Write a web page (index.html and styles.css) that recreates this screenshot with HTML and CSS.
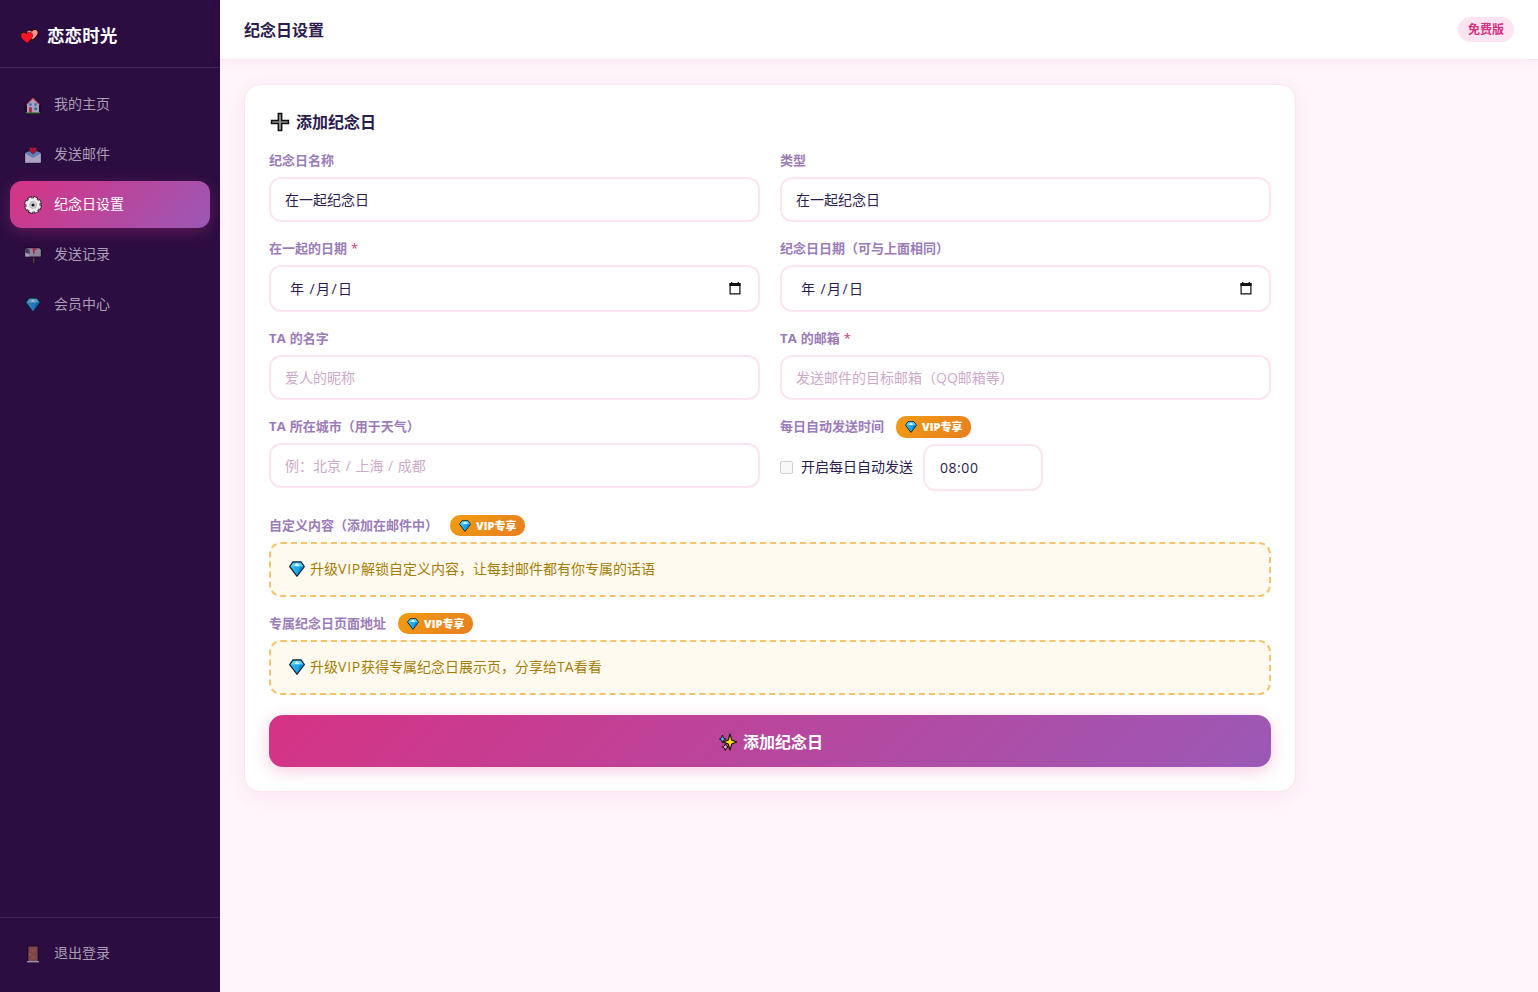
FILE: index.html
```
<!DOCTYPE html>
<html lang="zh-CN">
<head>
<meta charset="utf-8">
<title>纪念日设置</title>
<link rel="stylesheet" href="styles.css">
</head>
<body>
<svg class="defs" width="0" height="0" aria-hidden="true">
  <symbol id="gem" viewBox="0 0 16 16">
    <path d="M4 1h8l3.300 4.600L8 15.200.7 5.600z" fill="#35b8f0" stroke="#0b2030" stroke-width="1.300" stroke-linejoin="round"/>
    <path d="M4.300 1.700 1.600 5.600h3.200L8 1.700z" fill="#58d3fb"/>
    <path d="M8 1.700h3.700l2.700 3.900h-3.200z" fill="#58d3fb"/>
    <path d="M8 1.700 11.200 5.600H4.800z" fill="#d8f7ff"/>
    <path d="M4.800 5.600h6.400L8 14.300z" fill="#19a7ee"/>
    <path d="M11.200 5.600h3.200L8 14.300z" fill="#0b83cb"/>
  </symbol>
</svg>
<div class="app">
  <aside class="sidebar">
    <div class="logo">
      <svg class="logo-icon" viewBox="0 0 19 16">
        <path d="M12 12.300C9 10.500 6.200 8 6.400 4.800 6.600 1.800 10 1 11.800 3 13.500.6 17.600.8 18.200 3.800c.5 3-2.400 6-6.200 8.500z" fill="#ff8d8d" stroke="#1a0510" stroke-width="1.100"/>
        <path d="M7.400 15C3.800 12.800.7 10.300.8 7.200c.1-3 4-3.700 5.600-1.400C8 3.300 12.100 3.700 12.500 6.600c.4 3-2.200 6-5.100 8.400z" fill="#fb1525" stroke="#1a0510" stroke-width=".5"/>
      </svg>
      <span>恋恋时光</span>
    </div>
    <nav class="nav">
      <a class="item">
        <svg class="icon" viewBox="0 0 18 18">
          <path d="M1.500 8.300 9 1l7.500 7.300v8.900h-15z" fill="#160a20" stroke="#160a20" stroke-width="1.500" stroke-linejoin="round"/>
          <path d="M3 8v9h12V8L9 2.300z" fill="#e3e0f2"/>
          <path d="M2.300 8.600 9 2.100l6.700 6.500" fill="none" stroke="#e03c48" stroke-width="1.200"/>
          <path d="M5 11.200h3V17H5z" fill="#e0474e"/><path d="M10.300 11.500h2.900v2.700h-2.900zM5.300 7.300h2.400v2.400H5.300zM10.300 7.300h2.400v2.400h-2.400z" fill="#3d9be0"/>
          <path d="M1.800 16.800h14.400" stroke="#4fab45" stroke-width="1.200"/>
        </svg><span>我的主页</span></a>
      <a class="item">
        <svg class="icon" viewBox="0 0 18 18">
          <path d="M.6 6.500 5 4.800h8l4.400 1.700v10.700H.6z" fill="#5b93d8" stroke="#160a20" stroke-width="1.200"/>
          <path d="M1.200 7.200 9 11.800l7.800-4.600v9.500H1.200z" fill="#e3e1f4"/>
          <path d="M1.200 7.200 5 5.300h8l3.800 1.900L9 11.800z" fill="#77adea"/>
          <path d="M9 7.800C6 6 4.600 4.200 5.200 2.500 5.800.8 8.200.8 9 2.300 9.800.8 12.200.8 12.800 2.500 13.400 4.200 12 6 9 7.800z" fill="#e01838" stroke="#4a0a28" stroke-width=".6"/>
        </svg><span>发送邮件</span></a>
      <a class="item active">
        <svg class="icon" viewBox="0 0 18 18">
          <circle cx="9" cy="9" r="7" fill="#17171b" stroke="#17171b" stroke-width="3.600" stroke-dasharray="4.300 1.198"/>
          <circle cx="9" cy="9" r="6.700" fill="#ededee"/>
          <circle cx="9" cy="9" r="7" fill="none" stroke="#ededee" stroke-width="2" stroke-dasharray="3.100 2.398" stroke-dashoffset="-.6"/>
          <circle cx="9" cy="9" r="3.500" fill="#d8d8da" stroke="#a8a8ac" stroke-width=".8"/>
          <circle cx="9" cy="9" r="1.600" fill="#17171b"/>
        </svg><span>纪念日设置</span></a>
      <a class="item">
        <svg class="icon" viewBox="0 0 18 18">
          <path d="M8.800 10h2v7.500h-2z" fill="#9b6543" stroke="#160a20" stroke-width=".8"/>
          <path d="M3.200 1.700H15a2.500 2.500 0 0 1 2.400 2.600v6.900H.7V4.300a2.500 2.500 0 0 1 2.500-2.600z" fill="#bcb8c7" stroke="#160a20" stroke-width="1.200"/>
          <path d="M1.400 10.500V4.600a2 2 0 0 1 4.200 0v5.900z" fill="#55505f"/>
          <path d="M1.400 6.700 5.600 8v2.500H1.400z" fill="#e4e1f1"/>
          <path d="M8.600 2.300h3.700v2h-1.600v3.500H9.200z" fill="#dc3143"/>
        </svg><span>发送记录</span></a>
      <a class="item">
        <svg class="icon gem-icon"><use href="#gem"/></svg><span>会员中心</span></a>
    </nav>
    <div class="side-foot">
      <a class="item">
        <svg class="icon" viewBox="0 0 18 18">
          <path d="M3.700.8h10.600v16H3.700z" fill="#a8624f" stroke="#160a20" stroke-width="1.300"/>
          <path d="M5.800 3h6.400v5H5.800zM5.800 10h6.400v5H5.800z" fill="#ae6855" stroke="#965443" stroke-width=".6"/>
          <path d="M3 16.700h12" stroke="#c7c4cf" stroke-width="1.500"/><circle cx="6" cy="9.200" r=".8" fill="#e7b04d"/>
        </svg><span>退出登录</span></a>
    </div>
  </aside>
  <div class="main">
    <header class="topbar">
      <h1>纪念日设置</h1>
      <span class="plan">免费版</span>
    </header>
    <main class="content">
      <section class="card">
        <h2 class="card-title">
          <svg class="plus" viewBox="0 0 20 20"><path d="M8.300 1.500h3.400v7h6.800v3h-6.800v7H8.300v-7H1.500v-3h6.800z" fill="#8b8b8f" stroke="#111" stroke-width="1.400"/></svg>
          <span>添加纪念日</span>
        </h2>
        <div class="grid">
          <div class="field"><div class="label">纪念日名称</div><div class="input">在一起纪念日</div></div>
          <div class="field"><div class="label">类型</div><div class="input">在一起纪念日</div></div>
          <div class="field"><div class="label">在一起的日期<span class="req">*</span></div>
            <div class="input date"><span class="date-text"><span class="year">年</span><span class="sep">/</span>月<span class="sep">/</span>日</span>
              <svg class="cal" viewBox="0 0 12 13"><path d="M2 0h1.300v2H2zM8.700 0H10v2H8.700z" fill="#111"/><path d="M1.100 1.700h9.800v10.200H1.100z" fill="none" stroke="#111" stroke-width="1.200"/><path d="M.5 1.200h11v2.800H.5z" fill="#111"/></svg></div></div>
          <div class="field"><div class="label">纪念日日期（可与上面相同）</div>
            <div class="input date"><span class="date-text"><span class="year">年</span><span class="sep">/</span>月<span class="sep">/</span>日</span>
              <svg class="cal" viewBox="0 0 12 13"><path d="M2 0h1.300v2H2zM8.700 0H10v2H8.700z" fill="#111"/><path d="M1.100 1.700h9.800v10.200H1.100z" fill="none" stroke="#111" stroke-width="1.200"/><path d="M.5 1.200h11v2.800H.5z" fill="#111"/></svg></div></div>
          <div class="field"><div class="label"><span class="ta">TA </span>的名字</div><div class="input hint">爱人的昵称</div></div>
          <div class="field"><div class="label"><span class="ta">TA </span>的邮箱<span class="req">*</span></div><div class="input hint">发送邮件的目标邮箱（QQ邮箱等）</div></div>
          <div class="field"><div class="label"><span class="ta">TA </span>所在城市（用于天气）</div><div class="input hint city">例：北京 / 上海 / 成都</div></div>
          <div class="field">
            <div class="label tall">每日自动发送时间<span class="vip"><svg><use href="#gem"/></svg><span>VIP专享</span></span></div>
            <div class="auto"><span class="check"></span><span class="auto-text">开启每日自动发送</span><div class="input time">08:00</div></div>
          </div>
        </div>
        <div class="block">
          <div class="label">自定义内容（添加在邮件中）<span class="vip"><svg><use href="#gem"/></svg><span>VIP专享</span></span></div>
          <div class="locked"><svg><use href="#gem"/></svg><span>升级<span class="lat">VIP</span>解锁自定义内容，让每封邮件都有你专属的话语</span></div>
        </div>
        <div class="block">
          <div class="label">专属纪念日页面地址<span class="vip"><svg><use href="#gem"/></svg><span>VIP专享</span></span></div>
          <div class="locked"><svg><use href="#gem"/></svg><span>升级<span class="lat">VIP</span>获得专属纪念日展示页，分享给TA看看</span></div>
        </div>
        <button class="submit" type="button">
          <svg viewBox="0 0 18 18">
            <path d="M11 .8 12.700 7l5 2-5 2L11 17.200 9.300 11l-5-2 5-2z" fill="#ffe01a" stroke="#15100a" stroke-width="1.100" stroke-linejoin="round"/>
            <path d="M3.500 2 4.500 5 7 6 4.500 7l-1 3-1-3L.4 6l2.100-1z" fill="#45cbf5" stroke="#15100a" stroke-width=".9"/>
            <path d="M6.300 10.500 7.300 13l2.200 1-2.200 1-1 2.500-1-2.500-2.200-1 2.200-1z" fill="#f6a9c4" stroke="#15100a" stroke-width=".9"/>
          </svg>
          <span>添加纪念日</span>
        </button>
      </section>
    </main>
  </div>
</div>
</body>
</html>
```
FILE: styles.css
```
* { box-sizing: border-box; }
body {
  margin: 0;
  font-family: "Open Sans", "Noto Sans CJK SC", sans-serif;
  font-size: 14px;
  line-height: 20px;
  color: #2d1b4e;
  background: #fff5fb;
}
.defs { position: absolute; }
svg { display: block; flex: none; }
.app { display: flex; height: 992px; }

.sidebar { width: 220px; flex: none; display: flex; flex-direction: column; background: #2b0d42; }
.logo {
  display: flex; align-items: center; gap: 8px;
  height: 68px; padding: 4px 20px 0;
  border-bottom: 1px solid #432856;
  color: #fff; font-size: 17.6px; font-weight: 700;
}
.logo > span { margin-top: -1px; }
.logo-icon { width: 19px; height: 16px; }
.nav { flex: 1; display: flex; flex-direction: column; gap: 3px; padding: 13px 10px; }
.item {
  display: flex; align-items: center; gap: 12px;
  height: 47px; padding: 0 14px;
  border-radius: 12px; color: #aa9eb3;
}
.icon { width: 18px; height: 18px; opacity: .7; }
.item > span { line-height: 20px; padding-bottom: 2px; }
.gem-icon { padding: 1px; }
.item.active {
  color: #fff;
  background: linear-gradient(135deg, #d63384, #9b59b6);
  box-shadow: 0 4px 15px rgba(214, 51, 132, .3);
}
.active .icon { opacity: 1; }
.side-foot { height: 75px; padding: 12px 10px; border-top: 1px solid #432856; }

.main { flex: 1; min-width: 0; }
.topbar {
  display: flex; align-items: center; justify-content: space-between;
  height: 60px; padding: 0 24px;
  background: #fff;
  border-bottom: 1px solid #fce4f0;
  box-shadow: 0 2px 12px rgba(214, 51, 132, .06);
}
.topbar h1 { margin: 0; font-size: 16px; font-weight: 600; line-height: 24px; }
.plan {
  width: 56px; height: 25px; border-radius: 13px;
  text-align: center; font-size: 12px; line-height: 25px; font-weight: 600;
  color: #d63384; background: #fce4f0;
}
.content { padding: 24px; }
.card {
  width: 1052px; height: 708px; padding: 24px;
  border: 1px solid #fce4f0; border-radius: 16px;
  background: #fff;
  box-shadow: 0 4px 20px rgba(214, 51, 132, .08);
}
.card-title { display: flex; align-items: center; gap: 6px; height: 25px; margin: 0 0 16px; padding-left: 1px; font-size: 16px; font-weight: 600; }
.plus { width: 20px; height: 20px; }
.grid { display: grid; grid-template-columns: 1fr 1fr; gap: 16px 20px; margin-bottom: 24px; }
.label {
  display: flex; align-items: center; height: 21px; margin-bottom: 6px; line-height: 18px; padding-bottom: 2px;
  font-size: 13px; font-weight: 600; color: #9b7bb8; white-space: pre;
}
.label.tall { height: 22px; }
.ta { font-weight: 700; letter-spacing: .3px; }
.req { margin-left: 4px; color: #d63384; font-weight: 400; }
.input {
  display: flex; align-items: center; height: 45px; padding: 0 14px;
  border: 2px solid #fce4f0; border-radius: 12px; background: #fff; white-space: pre;
}
.hint { color: #cda9ca; }
.city { word-spacing: 1px; }
.date { height: 47px; padding: 0 17px 0 19px; justify-content: space-between; }
.date-text { display: flex; }
.year { margin-right: 4px; }
.sep { width: 8px; text-align: center; }
.cal { width: 12px; height: 13px; }
.auto { display: flex; align-items: center; }
.check { width: 13px; height: 13px; margin-right: 8px; border: 1px solid #cfcfcf; border-radius: 2px; background: #f8f8f8; }
.auto-text { width: 112px; margin-right: 10px; padding-bottom: 2px; white-space: nowrap; }
.time { width: 120px; height: 47px; padding-left: 15px; letter-spacing: .55px; }
.vip {
  display: flex; align-items: center; gap: 5px; flex: none;
  width: 75px; height: 21px; margin: 0 0 -2px 12px; padding-left: 9px;
  border-radius: 10px; font-size: 11px; font-weight: 800; color: #fff;
  background: linear-gradient(135deg, #f39c12, #e67e22);
}
.tall .vip { height: 22px; }
.vip svg { width: 12px; height: 12px; }
.block { margin-bottom: 16px; }
.locked {
  display: flex; align-items: center; gap: 5px;
  height: 55px; padding: 0 17px 2px 18px;
  border: 2px dashed #f4c46d; border-radius: 12px;
  background: #fffaf0; color: #a67c00;
}
.locked svg { width: 16px; height: 16px; }
.lat { letter-spacing: .8px; }
.submit {
  display: flex; align-items: center; justify-content: center; gap: 6px;
  width: 100%; height: 52px; margin-top: 20px; padding: 2px 0 0 2px;
  border: 0; border-radius: 14px;
  font: 700 16px/24px "Open Sans", "Noto Sans CJK SC", sans-serif; color: #fff;
  background: linear-gradient(135deg, #d63384, #9b59b6);
  box-shadow: 0 4px 16px rgba(214, 51, 132, .25);
}
.submit svg { width: 18px; height: 18px; }
```
